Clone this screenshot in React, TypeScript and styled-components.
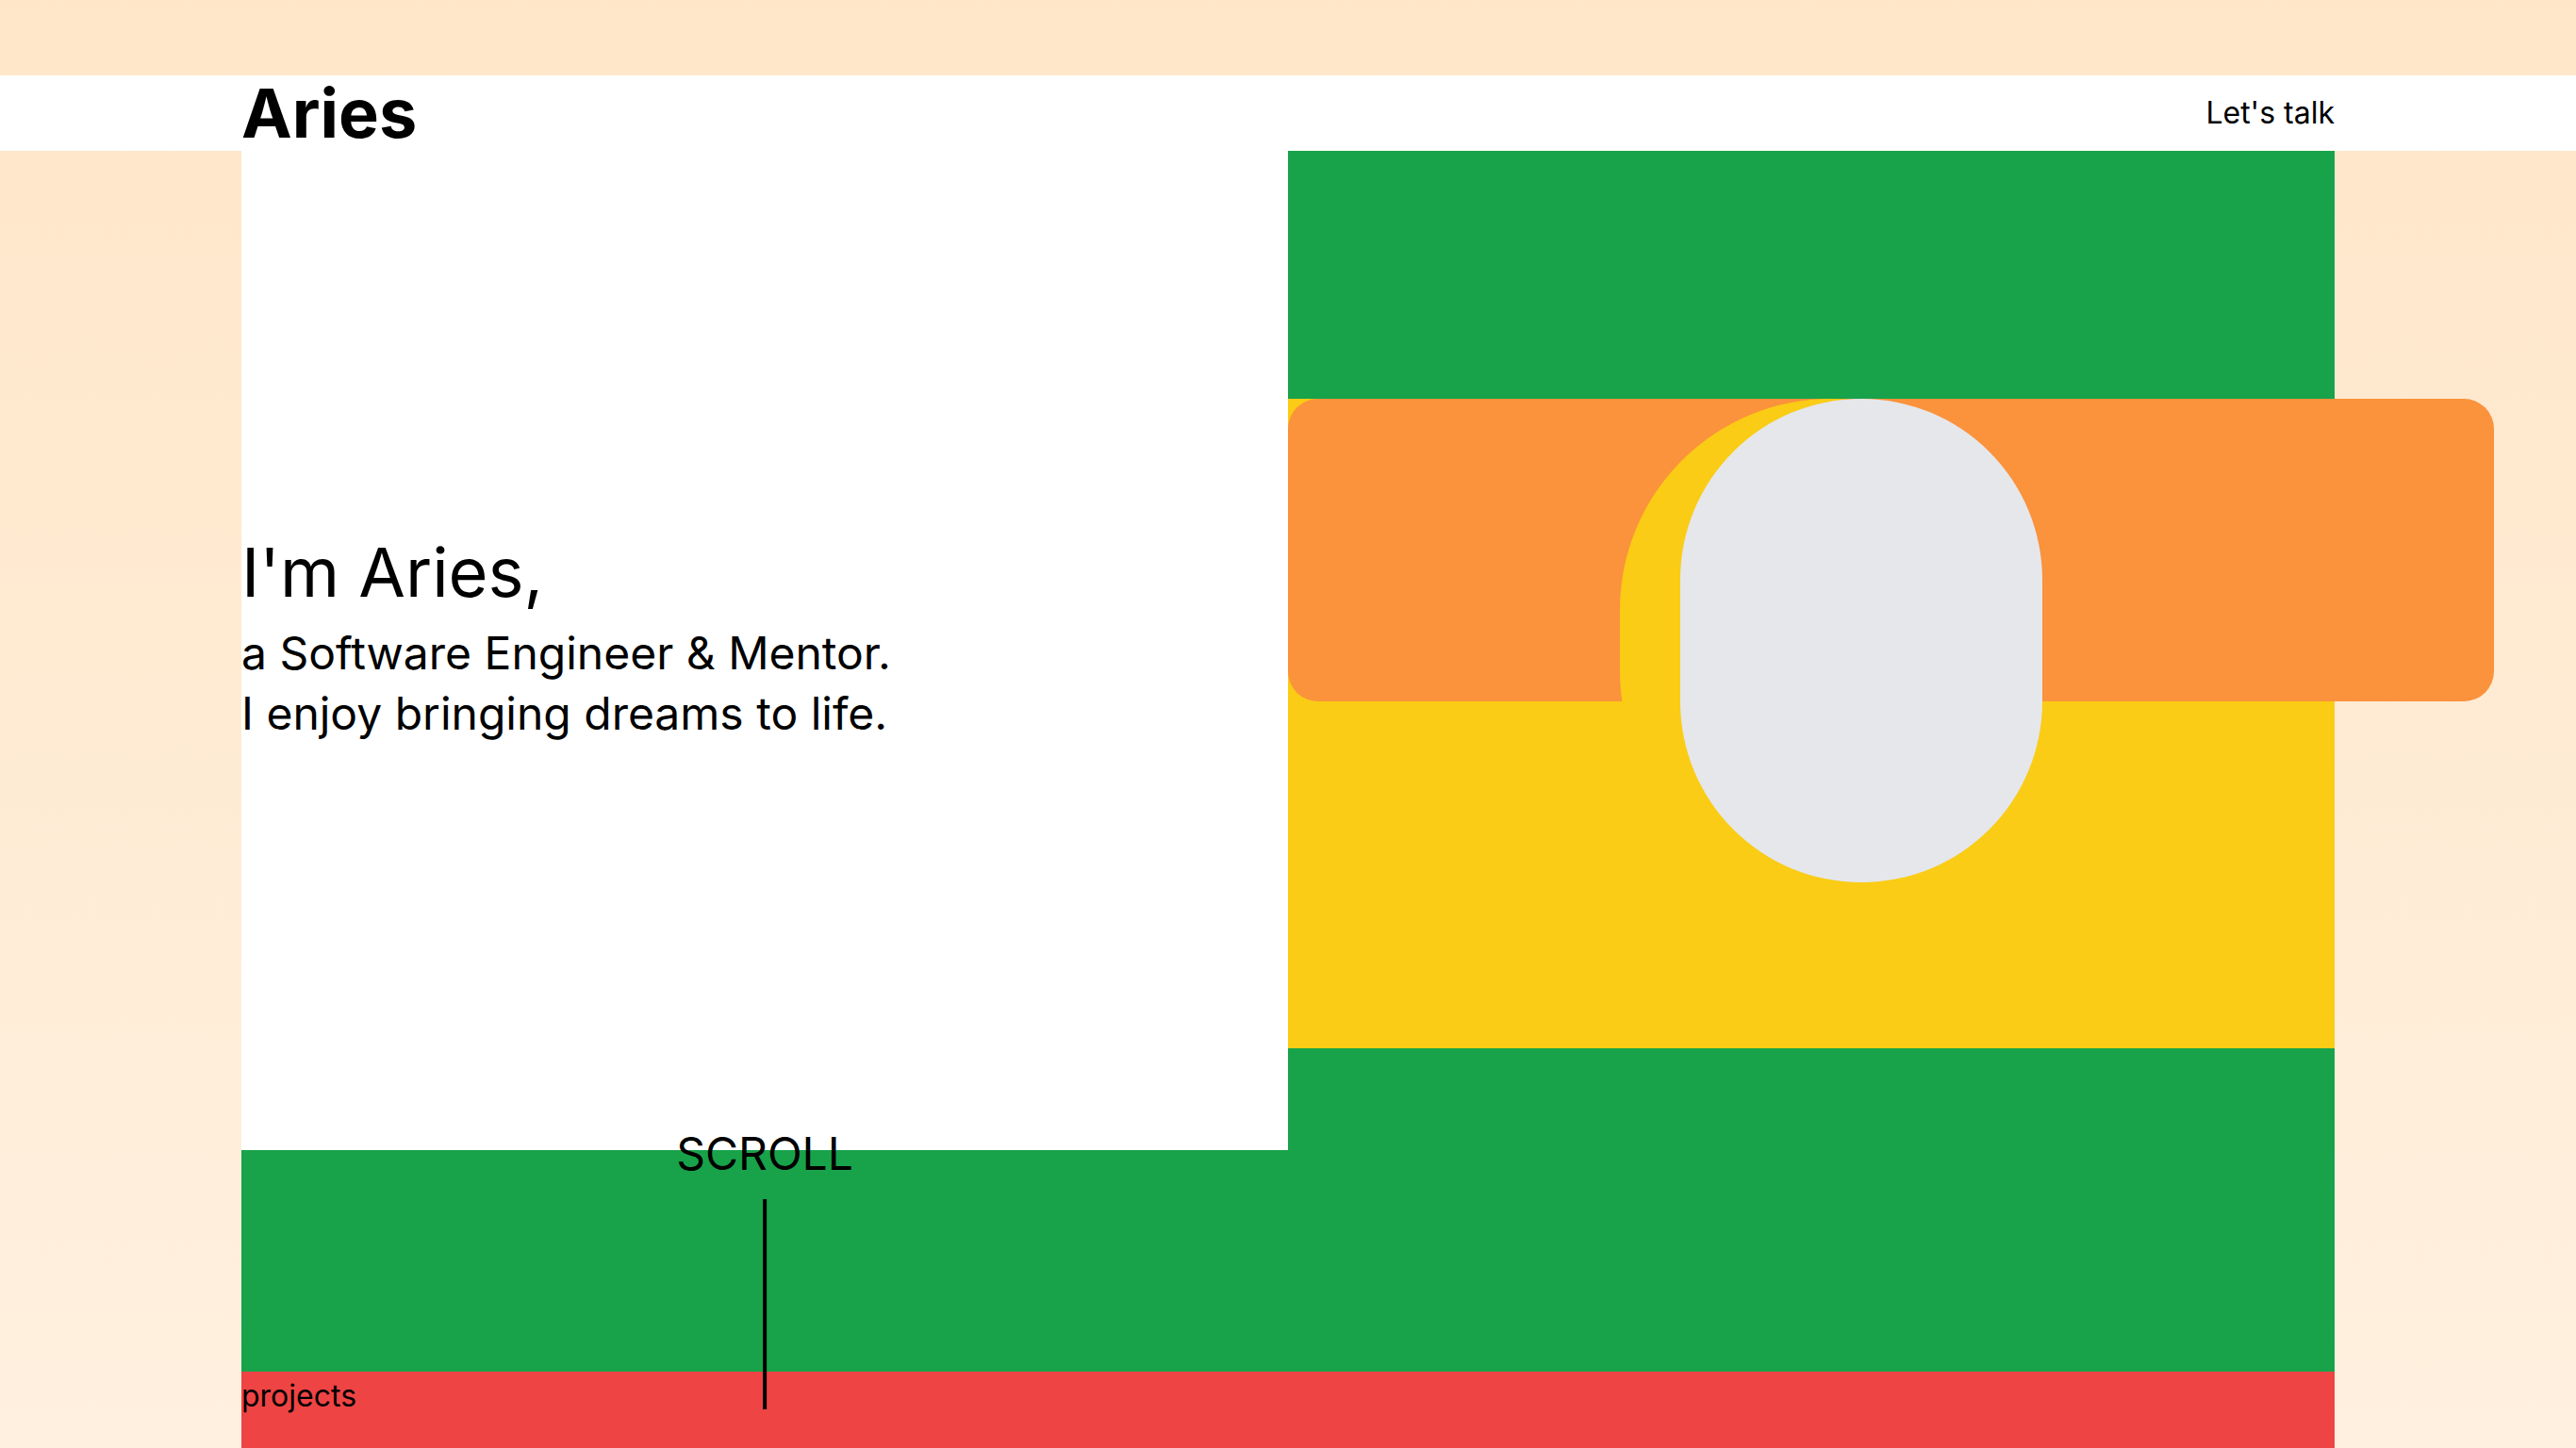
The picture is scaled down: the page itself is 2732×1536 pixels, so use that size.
import React from "react";
import styled, { createGlobalStyle } from "styled-components";

const GlobalStyle = createGlobalStyle`
  html, body {
    margin: 0;
    padding: 0;
  }
  body {
    min-height: 100vh;
    background: linear-gradient(180deg, #ffe6c8 0%, #fff0df 100%);
    font-family: Inter, "Noto Sans", "Liberation Sans", sans-serif;
    color: #000;
  }
  * { box-sizing: border-box; }
`;

const Page = styled.div`
  padding-top: 80px;
  min-height: 100vh;
`;

const Header = styled.header`
  background: #ffffff;
  height: 80px;
`;

const HeaderInner = styled.div`
  width: 2220px;
  height: 100%;
  margin: 0 auto;
  display: flex;
  align-items: center;
  justify-content: space-between;
`;

const Logo = styled.div`
  font-size: 72px;
  font-weight: 700;
  line-height: 1;
`;

const TalkLink = styled.a`
  font-size: 32px;
  line-height: 1.5;
  color: #000;
  text-decoration: none;
`;

const Main = styled.main`
  width: 2220px;
  margin: 0 auto;
`;

const Hero = styled.section`
  display: grid;
  grid-template-columns: 1fr 1fr;
  height: 1295px;
  background: #18a34a;
`;

const LeftCol = styled.div`
  position: relative;
  display: flex;
  flex-direction: column;
`;

const IntroPanel = styled.div`
  height: 1060px;
  background: #ffffff;
  display: flex;
  flex-direction: column;
  justify-content: center;
  padding-bottom: 21px;
`;

const Heading = styled.h1`
  margin: 0 0 18px;
  font-size: 72px;
  font-weight: 400;
  line-height: 1;
`;

const Tagline = styled.p`
  margin: 0;
  font-size: 48px;
  line-height: 64px;
`;

const ScrollCue = styled.div`
  position: absolute;
  top: 1040px;
  left: 50%;
  transform: translateX(-50%);
  display: flex;
  flex-direction: column;
  align-items: center;
  gap: 24px;
  z-index: 2;
`;

const ScrollLabel = styled.span`
  font-size: 48px;
  line-height: 1;
`;

const ScrollLine = styled.span`
  display: block;
  width: 4px;
  height: 223px;
  background: #000;
`;

const RightCol = styled.div`
  padding-top: 263px;
`;

const Stage = styled.div`
  position: relative;
  height: 689px;
  background: #facc15;
`;

const Band = styled.div`
  width: calc(100% + 169px);
  height: 321px;
  background: #fb923c;
  border-radius: 32px;
`;

const Capsule = styled.div<{ $left: number; $width: number; $color: string }>`
  position: absolute;
  top: 0;
  left: ${(p) => p.$left}px;
  width: ${(p) => p.$width}px;
  height: 513px;
  border-radius: 9999px;
  background: ${(p) => p.$color};
`;

const Projects = styled.section`
  height: 81px;
  background: #ef4444;
  padding-top: 2px;
`;

const ProjectsLabel = styled.span`
  font-size: 32px;
  line-height: 1.5;
`;

export default function App() {
  return (
    <>
      <GlobalStyle />
      <Page>
        <Header>
          <HeaderInner>
            <Logo>Aries</Logo>
            <TalkLink href="#">Let's talk</TalkLink>
          </HeaderInner>
        </Header>
        <Main>
          <Hero>
            <LeftCol>
              <IntroPanel>
                <Heading>I'm Aries,</Heading>
                <Tagline>
                  a Software Engineer &amp; Mentor.
                  <br />I enjoy bringing dreams to life.
                </Tagline>
              </IntroPanel>
              <ScrollCue>
                <ScrollLabel>SCROLL</ScrollLabel>
                <ScrollLine />
              </ScrollCue>
            </LeftCol>
            <RightCol>
              <Stage>
                <Band />
                <Capsule $left={352} $width={448} $color="#facc15" />
                <Capsule $left={416} $width={384} $color="#e5e7eb" />
              </Stage>
            </RightCol>
          </Hero>
          <Projects>
            <ProjectsLabel>projects</ProjectsLabel>
          </Projects>
        </Main>
      </Page>
    </>
  );
}
